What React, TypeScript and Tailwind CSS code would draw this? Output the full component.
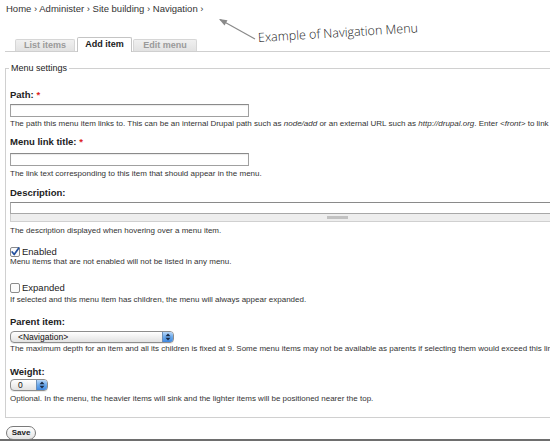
import React from "react";

const F = { fontFamily: '"Liberation Sans", Arial, sans-serif' };

function Arrows() {
  return (
    <svg width="6" height="8" viewBox="0 0 6 8">
      <path d="M3 0.5 L5.5 3.2 H0.5 Z" fill="#1b2a44" />
      <path d="M3 7.5 L5.5 4.8 H0.5 Z" fill="#1b2a44" />
    </svg>
  );
}

function Select({ w, text }: { w: number; text: string }) {
  return (
    <div
      className="flex items-stretch h-[12px] rounded-[4px] border border-[#8d8d8d] bg-gradient-to-b from-white to-[#e2e2e2] overflow-hidden shadow-[0_1px_0_rgba(0,0,0,0.08)]"
      style={{ width: w }}
    >
      <div className="flex-1 pl-[7px] text-[8.5px] leading-[10px] text-[#111]">{text}</div>
      <div className="w-[11px] flex items-center justify-center bg-gradient-to-b from-[#b9d8f8] via-[#6aa9ec] to-[#3f88e0] border-l border-[#6b8fb8]">
        <Arrows />
      </div>
    </div>
  );
}

function Label({ children, req, className = "" }: { children: React.ReactNode; req?: boolean; className?: string }) {
  return (
    <div className={"text-[9.5px] leading-[12px] font-bold text-[#222] " + className}>
      {children}
      {req && <span className="text-[#dd2222]"> *</span>}
    </div>
  );
}

function Desc({ children, className = "" }: { children: React.ReactNode; className?: string }) {
  return <div className={"text-[8px] leading-[10px] text-[#333] whitespace-nowrap " + className}>{children}</div>;
}

export default function App() {
  return (
    <div className="relative w-[550px] h-[441px] overflow-hidden bg-white flex flex-col" style={F}>
      {/* breadcrumb */}
      <div className="h-[18px] pt-[3px] pl-[6px] text-[9.5px] leading-[12px] text-[#333]">
        Home › Administer › Site building › Navigation ›
      </div>

      {/* annotation */}
      <svg className="absolute left-0 top-0" width="260" height="45" viewBox="0 0 260 45">
        <line x1="220" y1="19.5" x2="255" y2="39" stroke="#8a8a8a" strokeWidth="1.2" />
        <path d="M219 19 L227.5 20.2 L224.5 25.5 Z" fill="#8a8a8a" />
      </svg>
      <div
        className="absolute left-[258px] top-[30px] text-[12.5px] leading-[16px] text-[#222] origin-left -rotate-[3.5deg] whitespace-nowrap"
        style={{ fontFamily: '"Open Sans", "DejaVu Sans", sans-serif', fontWeight: 300 }}
      >
        Example of Navigation Menu
      </div>

      {/* tabs */}
      <div className="mt-[19px] ml-[5px] h-[15px] border-b border-[#cfcfcf] flex items-end pl-[10px] text-[9px] font-bold">
        <div className="w-[60px] h-[12px] flex items-center justify-center border border-b-0 border-[#d6d6d6] bg-gradient-to-b from-[#f0f0f0] to-[#e2e2e2] text-[#9a9a9a] rounded-t-[2px]">
          List items
        </div>
        <div className="ml-[2px] w-[55px] h-[15px] -mb-px flex items-center justify-center border border-b-0 border-[#c4c4c4] bg-white text-[#1a1a1a] rounded-t-[2px]">
          Add item
        </div>
        <div className="ml-[1px] w-[64px] h-[12px] flex items-center justify-center border border-b-0 border-[#d6d6d6] bg-gradient-to-b from-[#f0f0f0] to-[#e2e2e2] text-[#9a9a9a] rounded-t-[2px]">
          Edit menu
        </div>
      </div>

      {/* fieldset */}
      <div className="relative mt-[16px] ml-[5px] w-[620px] h-[350px] border border-[#d0d0d0] pl-[4px] shrink-0">
        <div className="absolute left-[3px] -top-[6px] px-[2px] bg-white text-[9px] leading-[11px] text-[#222]">
          Menu settings
        </div>

        <Label req className="mt-[20px]">Path:</Label>
        <div className="mt-[3px] w-[239px] h-[13px] border border-[#a0a0a0] border-t-[#8a8a8a] bg-white shadow-[inset_0_1px_1px_rgba(0,0,0,0.08)]" />
        <Desc className="mt-[2px]">
          The path this menu item links to. This can be an internal Drupal path such as <i>node/add</i> or an external URL such as <i>http://drupal.org</i>. Enter <i>&lt;front&gt;</i> to link to the front page.
        </Desc>

        <Label req className="mt-[7px]">Menu link title:</Label>
        <div className="mt-[5px] w-[239px] h-[13px] border border-[#a0a0a0] border-t-[#8a8a8a] bg-white shadow-[inset_0_1px_1px_rgba(0,0,0,0.08)]" />
        <Desc className="mt-[3px]">The link text corresponding to this item that should appear in the menu.</Desc>

        <Label className="mt-[8px]">Description:</Label>
        <div className="mt-[3px] w-[650px]">
          <div className="h-[12px] border border-[#a8a8a8] border-t-[#8a8a8a] bg-white" />
          <div className="h-[8px] border border-t-0 border-[#d0d0d0] bg-[#eeeeee] relative">
            <div className="absolute left-[316px] top-[2px] w-[21px] h-[3px] bg-[#c2c2c2]" />
          </div>
        </div>
        <Desc className="mt-[4px]">The description displayed when hovering over a menu item.</Desc>

        <div className="mt-[11px] h-[10px] flex items-center gap-[2px] text-[9.5px] leading-[10px] text-[#222]">
          <svg width="10" height="10" viewBox="0 0 10 10">
            <rect x="0.5" y="0.5" width="9" height="9" rx="1.5" fill="#fbfbfb" stroke="#8a8a8a" />
            <path d="M2.2 5 L4.2 7.6 L8.8 1" fill="none" stroke="#24519e" strokeWidth="1.7" strokeLinecap="round" strokeLinejoin="round" />
          </svg>
          <span>Enabled</span>
        </div>
        <Desc>Menu items that are not enabled will not be listed in any menu.</Desc>

        <div className="mt-[16px] h-[10px] flex items-center gap-[2px] text-[9.5px] leading-[10px] text-[#222]">
          <svg width="10" height="10" viewBox="0 0 10 10">
            <rect x="0.5" y="0.5" width="9" height="9" rx="1.5" fill="#fbfbfb" stroke="#8a8a8a" />
          </svg>
          <span>Expanded</span>
        </div>
        <Desc className="mt-[2px]">If selected and this menu item has children, the menu will always appear expanded.</Desc>

        <Label className="mt-[11px]">Parent item:</Label>
        <div className="mt-[3px]">
          <Select w={164} text="<Navigation>" />
        </div>
        <Desc className="mt-[1px]">
          The maximum depth for an item and all its children is fixed at 9. Some menu items may not be available as parents if selecting them would exceed this limit.
        </Desc>

        <Label className="mt-[12px]">Weight:</Label>
        <div className="mt-[1px]">
          <Select w={38} text="0" />
        </div>
        <Desc className="mt-[3px]">Optional. In the menu, the heavier items will sink and the lighter items will be positioned nearer the top.</Desc>
      </div>

      {/* save */}
      <div className="mt-[8px] h-[13px] pl-[6px] shrink-0">
        <div className="relative z-10 w-[30px] h-[14px] rounded-full border border-[#7a7a7a] bg-gradient-to-b from-white to-[#e4e4e4] flex items-center justify-center text-[8px] font-bold text-[#222]">
          Save
        </div>
      </div>
      <div className="h-[2px] bg-[#6e6e6e] shrink-0" />
    </div>
  );
}
